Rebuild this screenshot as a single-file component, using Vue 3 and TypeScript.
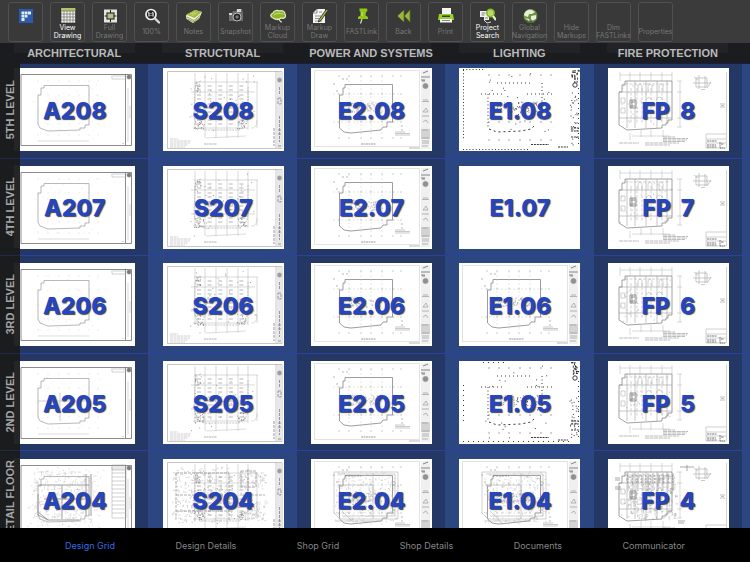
<script setup lang="ts">
interface Tool {
  id: string
  lines: string[]
  active?: boolean
}

type Kind = 'arch' | 'struct' | 'power' | 'speckled' | 'blank' | 'fire'

interface Sheet {
  label: string
  kind: Kind
  dense?: boolean
  seed: number
}

interface Level {
  name: string
  sheets: Sheet[]
}

const tools: Tool[] = [
  { id: 'logo', lines: [] },
  { id: 'view', lines: ['View', 'Drawing'], active: true },
  { id: 'full', lines: ['Full', 'Drawing'] },
  { id: 'zoom', lines: ['100%'] },
  { id: 'notes', lines: ['Notes'] },
  { id: 'snapshot', lines: ['Snapshot'] },
  { id: 'cloud', lines: ['Markup', 'Cloud'] },
  { id: 'draw', lines: ['Markup', 'Draw'] },
  { id: 'pin', lines: ['FASTLink'] },
  { id: 'back', lines: ['Back'] },
  { id: 'print', lines: ['Print'] },
  { id: 'search', lines: ['Project', 'Search'], active: true },
  { id: 'globe', lines: ['Global', 'Navigation'] },
  { id: 'hide', lines: ['Hide', 'Markups'] },
  { id: 'dim', lines: ['Dim', 'FASTLinks'] },
  { id: 'props', lines: ['Properties'] },
]

const disciplines = ['ARCHITECTURAL', 'STRUCTURAL', 'POWER AND SYSTEMS', 'LIGHTING', 'FIRE PROTECTION']

const lightingKinds: Record<number, Kind> = { 8: 'speckled', 7: 'blank', 6: 'power', 5: 'speckled', 4: 'power' }

function level(name: string, n: number): Level {
  const dense = n === 4
  return {
    name,
    sheets: [
      { label: `A20${n}`, kind: 'arch', dense, seed: n * 11 },
      { label: `S20${n}`, kind: 'struct', dense, seed: n * 13 },
      { label: `E2.0${n}`, kind: 'power', dense, seed: n * 17 },
      { label: `E1.0${n}`, kind: lightingKinds[n], dense, seed: n * 19 },
      { label: `FP  ${n}`, kind: 'fire', dense, seed: n * 23 },
    ],
  }
}

const levels: Level[] = [
  level('5TH LEVEL', 8),
  level('4TH LEVEL', 7),
  level('3RD LEVEL', 6),
  level('2ND LEVEL', 5),
  level('RETAIL FLOOR', 4),
]

const tabs = ['Design Grid', 'Design Details', 'Shop Grid', 'Shop Details', 'Documents', 'Communicator']

// Repeatable scatter of short marks inside a box, as one path.
function marks(seed: number, count: number, x: number, y: number, w: number, h: number, len = 1): string {
  let s = seed * 7919 + 17
  const next = () => {
    s = (s * 16807) % 2147483647
    return s / 2147483647
  }
  let d = ''
  for (let i = 0; i < count; i++) {
    const px = (x + next() * w).toFixed(1)
    const py = (y + next() * h).toFixed(1)
    d += next() > 0.5 ? `M${px} ${py}h${len}` : `M${px} ${py}v${len}`
  }
  return d
}

// Column-grid ticks at every crossing of the two lists.
function ticks(xs: number[], ys: number[]): string {
  return ys.map((y) => xs.map((x) => `M${x - 0.5} ${y}h1`).join('')).join('')
}

const bays = [28, 38, 50, 60, 71, 82, 90]
</script>

<template>
  <div class="app">
    <header class="toolbar">
      <button v-for="t in tools" :key="t.id" type="button" class="tool" :class="{ active: t.active }" :aria-label="t.lines.join(' ') || 'Home'">
        <svg class="icon" viewBox="0 0 16 16" aria-hidden="true">
          <g v-if="t.id === 'logo'">
            <rect x="1" y="1" width="14" height="14" fill="#2b5cab" />
            <path d="M3.500 3.500h3v3h-3zM7 3.500h2.500v3H7zM10 3.500h3v3h-3zM3.500 7h3v2.500h-3zM7 7h2.500v2.500H7zM3.500 10h3v3h-3z" fill="#e4ecf8" />
          </g>
          <g v-else-if="t.id === 'view'">
            <rect x="1" y="0" width="14.500" height="15" fill="#f4f4f0" stroke="#222" stroke-width=".6" />
            <rect x="1.300" y=".4" width="14" height="2.600" fill="#b4c65a" />
            <path d="M1 3h14.500M1 6h14.500M1 9h14.500M1 12h14.500M4 3v12M7 3v12M10 3v12M13 3v12" stroke="#6b6b66" stroke-width=".7" />
          </g>
          <g v-else-if="t.id === 'full'">
            <rect x="2" y="1.500" width="13" height="13" fill="#e3e3e0" />
            <rect x="5" y="5" width="7" height="6" fill="#b5c37f" stroke="#333" stroke-width="1.200" />
            <path d="M8.500 2v3M8.500 11v3M2.500 8H5M12 8h2.500" stroke="#222" />
          </g>
          <g v-else-if="t.id === 'zoom'">
            <circle cx="7" cy="6.500" r="5" fill="#222" stroke="#f0f0f0" stroke-width="1.700" />
            <path d="M11 10.500l4 4" stroke="#ddd" stroke-width="2.300" stroke-linecap="round" />
            <path d="M5 4.500v4M9 4.500v4M4.300 5L5 4.500M8.300 5L9 4.500M7 5.300v.8M7 7.300v.8" stroke="#fff" stroke-width="1.100" />
          </g>
          <g v-else-if="t.id === 'notes'">
            <path d="M0 7.500L9 2l7 2-3 7-6 4-6.500-4z" fill="#f2f5df" />
            <path d="M0 6.500L9 2l7 2-7.500 6z" fill="#9fb93d" />
            <path d="M1 9l7 3.500 6-5M1.500 11L8 14l5-4" fill="none" stroke="#718d29" stroke-width=".8" />
            <path d="M4 6.500l5-2.500M6 7.500L11.500 4.500" stroke="#dce8a8" stroke-width=".7" />
          </g>
          <g v-else-if="t.id === 'snapshot'">
            <path d="M1 5h3l1-2h3l1-2h5l1 4v8H1z" fill="#6d6d6d" />
            <path d="M9 1h4v3H9zM1 5h3v2H1z" fill="#d4d4d4" />
            <circle cx="9" cy="9" r="4" fill="#222" stroke="#bdbdbd" />
            <circle cx="9" cy="9" r="1.700" fill="#6f7d8b" />
          </g>
          <g v-else-if="t.id === 'cloud'">
            <path d="M3 10C0 9 0 6 3 5c1-3 5-3 6-2 3-1 6 0 6 3 2 3-1 5-4 4-2 2-5 2-8 0z" fill="#8fb52c" stroke="#e6eec6" stroke-width="1.200" />
            <path d="M7 11c4 0 2 3 5 3" fill="none" stroke="#e6eec6" stroke-width="1.200" />
            <path d="M4 7c2-2 6-2 9-1" stroke="#c6df79" fill="none" />
          </g>
          <g v-else-if="t.id === 'draw'">
            <path d="M1 5l4-4h8v14H1z" fill="#f4f4f4" />
            <path d="M1 5h4V1M3 8h6M3 10.500h4M3 13h7M7 4h3" fill="none" stroke="#777" stroke-width=".8" />
            <path d="M14.500 1L7 11.500 6.500 14 9 12.500 16 2.500z" fill="#97b93a" stroke="#222" stroke-width=".8" />
          </g>
          <g v-else-if="t.id === 'pin'">
            <path d="M5.500 .5l7.500 0 .5 2.500-1.500 1-.5 3.500 2.500 1.500 0 2-10 0 0-2 2.500-1.500 0-3.500L5.500 3z" fill="#90c818" />
            <path d="M8 4L8 8" stroke="#d3f07a" />
            <path d="M8 11l-1.500 4.500" stroke="#d8d8d8" stroke-width="1.200" />
          </g>
          <g v-else-if="t.id === 'back'">
            <path d="M8 2v12L1.500 8zM14 2v12L8.500 8z" fill="#9bb63b" />
            <path d="M8 2v12M14 2v12" stroke="#586b20" stroke-width=".8" />
          </g>
          <g v-else-if="t.id === 'print'">
            <path d="M4 0h9v7H4z" fill="#f4f4f4" />
            <path d="M1 6h14l1 6H0z" fill="#9bd02c" />
            <path d="M4 7.500h8v1.500H4z" fill="#36401b" />
            <path d="M2 11h12v3.500H2z" fill="#f4f4f4" />
            <path d="M4 12.500h8" stroke="#8a8a8a" />
          </g>
          <g v-else-if="t.id === 'search'">
            <path d="M0 3h9v9H4V9H0z" fill="#f2f2f2" />
            <path d="M1.500 5h4M1.500 7h3M5 10h3" stroke="#7d7d7d" />
            <circle cx="10.500" cy="5" r="3.700" fill="#b4dd62" stroke="#86b52c" stroke-width="1.500" />
            <path d="M13 8l3 4" stroke="#e5f2c8" stroke-width="2.200" />
            <path d="M4 12l3 3 4-1" stroke="#ddd" fill="none" />
          </g>
          <g v-else-if="t.id === 'globe'">
            <circle cx="8.500" cy="8" r="7" fill="#6d9148" />
            <path d="M2 7c1-5 5-6 8-5l3 2-3 2-3 0-1 3-3-1zM9 8l5-1 0 4-3 3-2-3zM3 10l4 1 1 3z" fill="#e5efd5" />
            <path d="M2 11a7 7 0 0 0 13-1c-3 3-9 4-13 1z" fill="#34591f" opacity=".6" />
          </g>
        </svg>
        <span class="caption">
          <span v-for="line in t.lines" :key="line">{{ line }}</span>
        </span>
      </button>
    </header>

    <div class="disciplines">
      <h2 v-for="d in disciplines" :key="d">{{ d }}</h2>
    </div>

    <main class="stage">
      <div class="grid">
        <template v-for="lv in levels" :key="lv.name">
          <div v-for="s in lv.sheets" :key="s.label" class="cell">
            <button type="button" class="sheet">
              <svg class="plan" :class="{ faint: s.kind !== 'speckled' }" viewBox="0 0 121 83" aria-hidden="true">
                <g v-if="s.kind === 'arch'" fill="none" stroke="#777" stroke-width=".5">
                  <path d="M7 6.500H117.500V77.500H7zM111.500 6V77" stroke="#222" stroke-width=".8" />
                  <path d="M98 6v5h14M99 8h12" stroke="#777" />
                  <circle cx="115" cy="9" r="2.200" fill="#333" />
                  <path d="M30 17.500H75V57H71V60H66V62L34 63 26 60 24 56V27H27V20H30z" stroke="#666" stroke-width=".7" />
                  <path :d="ticks([24, 34, 45, 55, 65, 75, 84], [13, 27, 42, 56, 67])" stroke="#888" />
                  <path d="M24 73H75" stroke="#999" />
                  <path :d="marks(s.seed, 30, 18, 12, 70, 56)" stroke="#bbb" />
                  <path d="M108 75.500h2M114 20v54M116 38v12" stroke="#888" />
                  <path v-if="s.seed === 55" d="M24 40H75M46 32V60" stroke="#777" />
                  <g v-if="s.dense">
                    <path d="M98 6h14v53H98zM98 10h14M98 14h14M98 18h14M98 22h14M98 26h14M98 30h14M98 34h14M98 38h14M98 42h14M98 46h14M98 50h14M98 54h14" stroke="#777" />
                    <path d="M24 26H48V60M24 35V56L34 61H65M48 26H75M72 15v42M77 15v42M24 53l10 8M30 40H72" stroke="#444" stroke-width=".8" />
                    <path :d="marks(s.seed, 200, 20, 12, 60, 52, 3)" stroke="#aaa" />
                    <path :d="marks(s.seed + 3, 110, 14, 8, 76, 62)" stroke="#777" />
                  </g>
                </g>

                <g v-else-if="s.kind === 'struct'" fill="none" stroke="#888" stroke-width=".5">
                  <path d="M4.500 3.500H119V80.500H4.500zM113 3V80" stroke="#555" />
                  <rect x="113.500" y="4" width="5.500" height="76" fill="#dcdcdc" stroke="none" />
                  <circle cx="116.500" cy="12" r="2.200" fill="#666" />
                  <path d="M116.500 19v8M115 30h3v6h-3zM116.500 48v26M115 62h3M115 66h3M115 78h3M111 60v18" stroke="#555" stroke-width=".9" stroke-dasharray="3 1" />
                  <path d="M32 5V62M42 5V70M53 5V70M64 5V70M75 5V70M85 5V62M94 14V60" stroke="#888" />
                  <path d="M31 14H95M28 24H92M28 48H92M30 60H85" stroke="#888" />
                  <path d="M34 18H82M34 22H82M34 27H82M34 31H82M34 36H82M34 40H82M34 44H82M34 52H82M34 56H82" stroke="#666" stroke-width=".7" stroke-dasharray="4 6.600" />
                  <path d="M38 13q-5 1-6 8l-1 26q1 13 11 15l34 0q8-4 9-13V18" stroke="#555" stroke-dasharray="2 1" />
                  <path :d="marks(s.seed, 14, 32, 14, 6, 10)" stroke="#444" stroke-width=".8" />
                  <path :d="marks(s.seed + 1, 22, 31, 52, 10, 10)" stroke="#444" stroke-width=".8" />
                  <path :d="marks(s.seed + 2, 20, 74, 51, 9, 10)" stroke="#444" stroke-width=".8" />
                  <path :d="marks(s.seed + 4, 14, 42, 28, 36, 18)" stroke="#444" stroke-width=".8" />
                  <path :d="marks(s.seed + 5, 20, 27, 8, 66, 62)" stroke="#555" stroke-width=".8" />
                  <path d="M43 70l40-2M88 60q6 1 6-8" stroke="#999" />
                  <path d="M7 71h8M7 73h21M7 75h20M7 77h18M7 79h15" stroke="#777" stroke-dasharray="3 .5" />
                  <path d="M41 76h13" stroke="#111" stroke-dasharray="2 .5" />
                  <g v-if="s.dense">
                    <path d="M13 14H66M13 14V60M66 14V62M13 36H66M13 52H66M78 12h15v16H78zM85 10v22M80 36h22" stroke="#555" stroke-width=".7" stroke-dasharray="3 1" />
                    <path :d="marks(s.seed, 260, 9, 8, 60, 56, 2)" stroke="#888" />
                    <path :d="marks(s.seed + 1, 70, 76, 12, 26, 18, 2)" stroke="#999" />
                    <path :d="marks(s.seed + 2, 70, 82, 42, 22, 20, 2)" stroke="#999" />
                  </g>
                </g>

                <g v-else-if="s.kind === 'power'" fill="none" stroke="#777" stroke-width=".5">
                  <path d="M3.500 2.500H108.500V78.500H3.500z" stroke="#aaa" />
                  <rect x="110" y="2" width="9" height="79" fill="#e9e9e9" stroke="none" />
                  <rect x="110" y="61" width="9" height="10" fill="#bdbdbd" stroke="none" />
                  <circle cx="114.500" cy="18" r="2.700" fill="#555" />
                  <path d="M112 5l5-2M110 9h9M110 12h4M111 13h3" stroke="#333" stroke-width=".9" />
                  <path d="M112 32h5M111 33.500h7M112 44l3-4 2 4zM111 48h7M112 54l3-2 2 3M111 62h6M111 70h7M111 73h7M111 75h7M111 78h6" stroke="#666" stroke-width=".7" />
                  <path d="M34 16.500H81.500V54H76V59H72L70 62 40 65 33 64 28.500 60V27H32V20H34z" stroke="#444" stroke-width=".8" />
                  <path :d="ticks(bays, [8, 26, 54, 70])" stroke="#555" stroke-width=".9" />
                  <path d="M38 8V68M50 8V68M60 8V68M71 8V68M22 26H90M22 54H90" stroke="#aaa" stroke-dasharray="2 2" stroke-width=".4" />
                  <path d="M22 16h2M25 23h2M31 11h2M35 11h2M90 58h2M90 62h2" stroke="#777" stroke-width=".8" />
                  <path :d="marks(s.seed, 80, 37, 34, 34, 10, 1.5)" stroke="#555" />
                  <path d="M84 64h10M84 65.500h15M84 67h15" stroke="#777" stroke-width=".6" />
                  <path d="M50 76h15" stroke="#444" stroke-width=".8" stroke-dasharray="2 .5" />
                  <path d="M98 80h11" stroke="#222" />
                  <g v-if="s.dense">
                    <path d="M23 13H87V60H29L23 54zM27 15H84V57H31M28 26H62V42H30zM31 52l12 12M62 14V60M25 62H72" stroke="#777" />
                    <path d="M34 17h16M83 22v6M83 50v3M84 24h1" stroke="#111" stroke-dasharray="2 1" />
                    <path :d="marks(s.seed, 160, 24, 13, 63, 50, 2.5)" stroke="#aaa" />
                    <path :d="marks(s.seed + 1, 60, 24, 13, 63, 50)" stroke="#555" />
                  </g>
                </g>

                <g v-else-if="s.kind === 'speckled'" fill="none" stroke="#222" stroke-width=".9">
                  <path v-if="s.seed > 100" d="M4.500 2V72M4 1.500h22M4 81.500h66" stroke-dasharray="1 2.200" />
                  <path v-else d="M4.500 24V60M4 80.500h110M24 1.500h24" stroke-dasharray="1 4" />
                  <path d="M38 15H74" stroke-dasharray="1 3" />
                  <path d="M83 15V48M29 26V60" stroke-dasharray="1 2.500" />
                  <path d="M22 26h22M68 26h26" stroke-dasharray="1 3" />
                  <path d="M30 61l8 3 24-1 10-2 4-4" stroke-dasharray="2 3" />
                  <path :d="marks(s.seed, 80, 36, 34, 44, 11)" stroke-width=".6" />
                  <path :d="ticks([30, 40, 50, 61, 71, 82, 92], [7, 54, 72])" stroke-width=".8" />
                  <path :d="marks(s.seed + 1, 22, 26, 5, 66, 72)" stroke-width=".8" />
                  <path :d="marks(s.seed + 2, 18, 112, 1, 7, 12, 2)" />
                  <circle cx="116" cy="17" r="2.200" />
                  <path :d="marks(s.seed + 3, 30, 111, 25, 8, 54)" />
                  <path d="M112 60h8M112 63h8M112 69h8M72 76.500h18M99 79h10" stroke-dasharray="2 .9" />
                  <path d="M119.500 20V80" stroke-dasharray="1 4" />
                </g>

                <g v-else-if="s.kind === 'fire'" fill="none" stroke="#777" stroke-width=".5">
                  <path d="M17 13H64V52H60V55H58V57H54V60L19 62 11 57V24H14V17H17z" stroke="#333" stroke-width=".7" />
                  <path d="M11 24H64M11 50H64M19 13V60M27 13V60M38 13V60M49 13V60M59 13V55" stroke="#555" />
                  <path d="M17 16h44M29 20v36M34 20v36M43 20v36M54 20v36M23 20v36" stroke="#777" stroke-dasharray="3 1.500" />
                  <path d="M30 24v-6q2-4 4 0v6M40 24v-6q2-4 4 0v6M51 24v-6q2-4 4 0v6M38 32q3-5 6 0M48 32q3-6 7 0M13 30h4v5h-4zM13 40h4v5h-4z" />
                  <path d="M12 7H64M12 4v9M22 4v9M32 4v9M43 4v9M54 4v9M64 4v9M72 13V59M69 13h5M69 24h5M69 50h5M69 59h5M24 68H62M22 65v7M33 62v7M43 62v7M55 62v7" stroke="#888" />
                  <path d="M22 32h6v8h-6zM23 34h4M22 38h5M24 32v8" stroke="#222" stroke-width=".7" />
                  <path :d="marks(s.seed, 30, 12, 14, 52, 44, 1.500)" stroke="#777" />
                  <path v-if="s.seed !== 115" d="M88 10h11v9H88zM85 15h18M91 7v14M97 8v12M86 9l4 3M99 20l4-6M93 21.500h4" stroke="#777" stroke-width=".6" />
                  <path d="M112 36h5M112 39h5M113 37.500h3" stroke="#444" />
                  <path d="M55 69h12M55 70.500h25M55 72h24M55 73.500h22M37 75h34M37 77h25M11 75h20" stroke="#555" stroke-width=".6" stroke-dasharray="4 .6" />
                  <path d="M118.500 4V80M98 66h20M98 71h20M98 75h20M98 80h20M98 66v14" stroke="#777" />
                  <path d="M99 73h10M99 77h9M99 79h10M112 74v6h5M113 76h3" stroke="#222" stroke-width=".9" stroke-dasharray="2 .5" />
                  <g v-if="s.dense">
                    <path d="M19 17H68M19 20H68M19 23H68" stroke="#555" stroke-width="1.200" stroke-dasharray="1.500 3" />
                    <path d="M20 14V32M25 14V32M30 14V32M35 14V32M40 14V32M45 14V32M50 14V32M55 14V32M60 14V32M65 14V32" stroke="#444" />
                    <path :d="marks(s.seed, 200, 18, 15, 50, 45, 2.500)" stroke="#777" />
                    <path d="M7 19h5M7 21h5M7 28h6M7 30h6M72 8h14M79 6v6M70 62h7M70 64h6" stroke="#444" stroke-width=".7" />
                  </g>
                </g>
              </svg>
              <span class="label">{{ s.label }}</span>
            </button>
          </div>
          <div class="cell edge"></div>
        </template>
      </div>
      <aside class="levels">
        <div v-for="lv in levels" :key="lv.name" class="level"><span>{{ lv.name }}</span></div>
      </aside>
    </main>

    <nav class="tabs">
      <a v-for="(tab, i) in tabs" :key="tab" href="#" :class="{ current: i === 0 }" @click.prevent>{{ tab }}</a>
    </nav>
  </div>
</template>

<style>
body {
  margin: 0;
  background: #000;
}
</style>

<style scoped>
.app {
  display: flex;
  flex-direction: column;
  height: 100vh;
  overflow: hidden;
  font-family: Inter, "Liberation Sans", sans-serif;
}

.toolbar {
  display: flex;
  gap: 7px;
  height: 43px;
  flex: none;
  box-sizing: border-box;
  padding: 2px 8px 1px;
  background: #3b3b3b;
}

.tool {
  display: flex;
  flex-direction: column;
  align-items: center;
  width: 35px;
  flex: none;
  box-sizing: border-box;
  padding: 5px 0 0;
  border: 1px solid #505050;
  border-radius: 3px;
  background: #393939;
  color: #777;
  font-family: inherit;
  font-size: 7px;
  line-height: 8px;
}

.tool.active {
  color: #fff;
}

.icon {
  width: 16px;
  height: 16px;
  flex: none;
}

.caption {
  display: flex;
  flex-direction: column;
  align-items: center;
  justify-content: center;
  height: 16px;
  white-space: nowrap;
}

.disciplines {
  position: relative;
  z-index: 1;
  display: grid;
  grid-template-columns: repeat(5, 1fr) 8px;
  height: 21px;
  flex: none;
  box-sizing: border-box;
  border-bottom: 1px solid #1a1f42;
  background: #1b1c1f;
}

.disciplines h2 {
  margin: 0;
  color: #b9b9b9;
  font-family: "Liberation Sans", Arial, sans-serif;
  font-size: 11px;
  font-weight: 700;
  line-height: 21px;
  text-align: center;
  white-space: nowrap;
  background: linear-gradient(#222326, #222326) top center / 121px 10px no-repeat;
}

.stage {
  display: grid;
  grid-template-columns: minmax(0, 1fr);
  grid-template-rows: minmax(0, 1fr);
  flex: 1;
  min-height: 0;
}

.grid,
.levels {
  grid-area: 1 / 1;
  height: calc(100% + 24px);
  margin-top: -3px;
}

.grid {
  display: grid;
  grid-template-columns: repeat(5, 1fr) 8px;
  grid-template-rows: repeat(5, 1fr);
  background: #2c4681;
}

.cell {
  display: flex;
  align-items: center;
  justify-content: center;
  box-sizing: border-box;
  padding: 1px 0 0 1px;
  border-bottom: 1px solid #2a429b;
}

.cell:nth-child(6n + 1),
.cell:nth-child(6n + 3),
.cell:nth-child(6n + 5) {
  background: #243765;
}

.sheet {
  display: grid;
  place-items: center;
  width: 121px;
  height: 83px;
  padding: 0;
  border: 0;
  background: #fff;
  font-family: inherit;
}

.plan,
.label {
  grid-area: 1 / 1;
}

.plan {
  width: 121px;
  height: 83px;
}

.plan.faint {
  opacity: 0.65;
}

.label {
  z-index: 1;
  padding-top: 2px;
  color: #2446c2;
  font-size: 23px;
  font-weight: 800;
  line-height: 28px;
  white-space: pre;
  text-shadow: 1px 1px 1px #444;
}

.levels {
  z-index: 1;
  display: grid;
  grid-template-rows: repeat(5, 1fr);
  width: 20px;
  background: #1b1c1e;
}

.level {
  display: flex;
  align-items: center;
  justify-content: center;
  min-height: 0;
  border-bottom: 1px solid #20284a;
  background: linear-gradient(#242527, #242527) right center / 6px 83px no-repeat;
}

.level span {
  writing-mode: vertical-rl;
  transform: rotate(180deg);
  color: #a6a6a6;
  font-family: "Liberation Sans", Arial, sans-serif;
  font-size: 11px;
  font-weight: 700;
  line-height: 14px;
  white-space: nowrap;
}

.tabs {
  position: relative;
  z-index: 2;
  display: flex;
  align-items: center;
  justify-content: space-between;
  height: 34px;
  flex: none;
  box-sizing: border-box;
  padding: 2px 65px 0;
  background: #000;
}

.tabs a {
  color: #868686;
  font-size: 9px;
  line-height: 12px;
  text-decoration: none;
}

.tabs a.current {
  color: #3a6be0;
}
</style>
